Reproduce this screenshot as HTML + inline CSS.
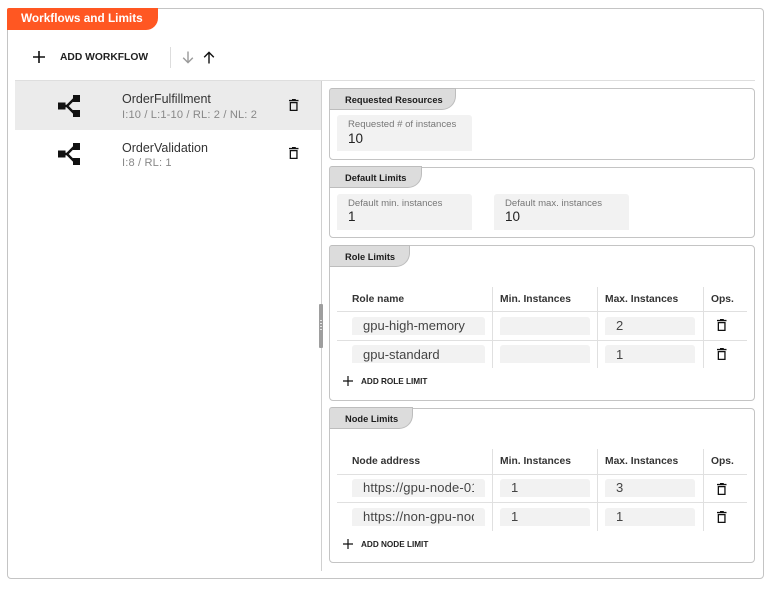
<!DOCTYPE html>
<html><head><meta charset="utf-8">
<style>
html,body{margin:0;padding:0;background:#fff;width:772px;height:589px;overflow:hidden}
body{position:relative;font-family:"Liberation Sans",sans-serif;color:#212121}
div,span,svg{position:absolute;box-sizing:border-box}
.t{white-space:nowrap;line-height:14px}
.card{left:329px;width:426px;border:1px solid #c4c4c4;border-radius:4px;background:#fff}
.tab{left:329px;height:22px;background:#dcdcdc;border:1px solid #bdbdbd;border-left-color:#c4c4c4;border-radius:3px 0 14px 0}
.tabt{left:345px;font-size:9.3px;font-weight:bold;color:#1c1c1c}
.f{background:#f2f2f2;border-radius:3px 3px 0 0;height:36px;width:135px}
.fl{font-size:9.6px;color:#777;left:348px}
.fv{font-size:13.5px;color:#222}
.h{height:1px;left:337px;width:410px;background:#e0e0e0}
.v{width:1px;background:#e0e0e0}
.th{font-size:10.3px;font-weight:bold;color:#333}
.in{height:18px;background:#f2f2f2;border-radius:3px 3px 0 0}
.c{font-size:13px;color:#444;overflow:hidden;height:16px;line-height:16px;white-space:nowrap}
.add{font-size:8.2px;font-weight:bold;color:#222;left:361px}
</style></head><body>
<svg width="0" height="0" style="position:absolute"><defs>
<symbol id="tr" viewBox="0 0 12 14"><path d="M4 1h3.8v.9H10.500v1.300H1V1.900H4zM1.700 4h7.900v9H1.700zM3 5.300v6.500h5.300V5.300z" fill="#111" fill-rule="evenodd"/></symbol>
<symbol id="sh" viewBox="0 0 22 22"><path d="M0 7.500h7.500v7H0zM15 0h7v7h-7zM15 15h7v7h-7z" fill="#111"/><path d="M6 11h3l8-8M9 11l8 8" fill="none" stroke="#111" stroke-width="2.400"/></symbol>
</defs></svg>

<div style="left:7px;top:8px;width:757px;height:571px;border:1px solid #c4c4c4;border-radius:4px"></div>
<div style="left:7px;top:8px;width:151px;height:22px;background:#ff5722;border-radius:2px 0 12px 0"></div>
<div class="t" style="left:21px;top:11px;color:#fff;font-size:11.8px;font-weight:bold">Workflows and Limits</div>

<svg style="left:33px;top:51px" width="12" height="12" viewBox="0 0 12 12"><path d="M0 6h12M6 0v12" stroke="#111" stroke-width="1.600"/></svg>
<div class="t" style="left:60px;top:51px;font-size:10.3px;font-weight:bold;color:#222">ADD WORKFLOW</div>
<div style="left:170px;top:47px;width:1px;height:21px;background:#ddd"></div>
<svg style="left:182px;top:51px" width="12" height="13" viewBox="0 0 12 13"><path d="M6 .5v11M1.200 6.800 6 11.600l4.800-4.800" fill="none" stroke="#9a9a9a" stroke-width="1.400"/></svg>
<svg style="left:203px;top:51px" width="12" height="13" viewBox="0 0 12 13"><path d="M6 12.500v-11M1.200 6.200 6 1.400l4.800 4.800" fill="none" stroke="#111" stroke-width="1.400"/></svg>
<div style="left:15px;top:80px;width:740px;height:1px;background:#dedede"></div>

<div style="left:15px;top:81px;width:306px;height:49px;background:#ebebeb"></div>
<div style="left:321px;top:81px;width:1px;height:490px;background:#d0d0d0"></div>
<div style="left:319px;top:304px;width:4px;height:44px;background:#9e9e9e;border-radius:1px"></div>
<div style="left:320px;top:320px;width:2px;height:11px;background:repeating-linear-gradient(#e4e4e4 0 1px,#9e9e9e 1px 3px)"></div>

<svg style="left:58px;top:95px" width="22" height="22"><use href="#sh"/></svg>
<svg style="left:58px;top:143px" width="22" height="22"><use href="#sh"/></svg>
<div class="t" style="left:122px;top:92px;font-size:12.5px;color:#333">OrderFulfillment</div>
<div class="t" style="left:122px;top:108px;font-size:11.1px;color:#888;letter-spacing:.15px">I:10 / L:1-10 / RL: 2 / NL: 2</div>
<div class="t" style="left:122px;top:141px;font-size:12.5px;color:#333">OrderValidation</div>
<div class="t" style="left:122px;top:156px;font-size:11.1px;color:#888;letter-spacing:.15px">I:8 / RL: 1</div>
<svg style="left:288px;top:98px" width="12" height="14"><use href="#tr"/></svg>
<svg style="left:288px;top:146px" width="12" height="14"><use href="#tr"/></svg>

<!-- Requested -->
<div class="card" style="top:88px;height:72px"></div>
<div class="tab" style="top:88px;width:127px"></div>
<div class="t tabt" style="top:93px">Requested Resources</div>
<div class="f" style="left:337px;top:115px"></div>
<div class="t fl" style="top:118px">Requested # of instances</div>
<div class="t fv" style="left:348px;top:132px">10</div>

<!-- Default -->
<div class="card" style="top:167px;height:71px"></div>
<div class="tab" style="top:166px;width:93px"></div>
<div class="t tabt" style="top:171px">Default Limits</div>
<div class="f" style="left:337px;top:194px"></div>
<div class="t fl" style="top:197px">Default min. instances</div>
<div class="t fv" style="left:348px;top:210px">1</div>
<div class="f" style="left:494px;top:194px"></div>
<div class="t fl" style="left:505px;top:197px">Default max. instances</div>
<div class="t fv" style="left:505px;top:210px">10</div>

<!-- Role -->
<div class="card" style="top:245px;height:156px"></div>
<div class="tab" style="top:245px;width:81px"></div>
<div class="t tabt" style="top:250px">Role Limits</div>
<div class="v" style="left:492px;top:287px;height:81px"></div>
<div class="v" style="left:597px;top:287px;height:81px"></div>
<div class="v" style="left:703px;top:287px;height:81px"></div>
<div class="h" style="top:311px"></div>
<div class="h" style="top:340px"></div>
<div class="t th" style="left:352px;top:293px">Role name</div>
<div class="t th" style="left:500px;top:293px">Min. Instances</div>
<div class="t th" style="left:605px;top:293px">Max. Instances</div>
<div class="t th" style="left:711px;top:293px">Ops.</div>
<div class="in" style="left:352px;top:317px;width:133px"></div>
<div class="in" style="left:500px;top:317px;width:90px"></div>
<div class="in" style="left:605px;top:317px;width:90px"></div>
<div class="c" style="left:363px;top:318px;width:111px">gpu-high-memory</div>
<div class="c" style="left:616px;top:318px;width:60px">2</div>
<svg style="left:716px;top:318px" width="12" height="14"><use href="#tr"/></svg>
<div class="in" style="left:352px;top:345px;width:133px"></div>
<div class="in" style="left:500px;top:345px;width:90px"></div>
<div class="in" style="left:605px;top:345px;width:90px"></div>
<div class="c" style="left:363px;top:347px;width:111px">gpu-standard</div>
<div class="c" style="left:616px;top:347px;width:60px">1</div>
<svg style="left:716px;top:347px" width="12" height="14"><use href="#tr"/></svg>
<svg style="left:343px;top:376px" width="10" height="10" viewBox="0 0 10 10"><path d="M0 5h10M5 0v10" stroke="#111" stroke-width="1.200"/></svg>
<div class="t add" style="top:375px">ADD ROLE LIMIT</div>

<!-- Node -->
<div class="card" style="top:408px;height:155px"></div>
<div class="tab" style="top:407px;width:84px"></div>
<div class="t tabt" style="top:412px">Node Limits</div>
<div class="v" style="left:492px;top:449px;height:82px"></div>
<div class="v" style="left:597px;top:449px;height:82px"></div>
<div class="v" style="left:703px;top:449px;height:82px"></div>
<div class="h" style="top:474px"></div>
<div class="h" style="top:502px"></div>
<div class="t th" style="left:352px;top:455px">Node address</div>
<div class="t th" style="left:500px;top:455px">Min. Instances</div>
<div class="t th" style="left:605px;top:455px">Max. Instances</div>
<div class="t th" style="left:711px;top:455px">Ops.</div>
<div class="in" style="left:352px;top:479px;width:133px"></div>
<div class="in" style="left:500px;top:479px;width:90px"></div>
<div class="in" style="left:605px;top:479px;width:90px"></div>
<div class="c" style="left:363px;top:480px;width:111px;letter-spacing:.15px">https://gpu-node-01</div>
<div class="c" style="left:511px;top:480px;width:60px">1</div>
<div class="c" style="left:616px;top:480px;width:60px">3</div>
<svg style="left:716px;top:482px" width="12" height="14"><use href="#tr"/></svg>
<div class="in" style="left:352px;top:508px;width:133px"></div>
<div class="in" style="left:500px;top:508px;width:90px"></div>
<div class="in" style="left:605px;top:508px;width:90px"></div>
<div class="c" style="left:363px;top:509px;width:111px;letter-spacing:.15px">https://non-gpu-node</div>
<div class="c" style="left:511px;top:509px;width:60px">1</div>
<div class="c" style="left:616px;top:509px;width:60px">1</div>
<svg style="left:716px;top:510px" width="12" height="14"><use href="#tr"/></svg>
<svg style="left:343px;top:539px" width="10" height="10" viewBox="0 0 10 10"><path d="M0 5h10M5 0v10" stroke="#111" stroke-width="1.200"/></svg>
<div class="t add" style="top:538px">ADD NODE LIMIT</div>
</body></html>
